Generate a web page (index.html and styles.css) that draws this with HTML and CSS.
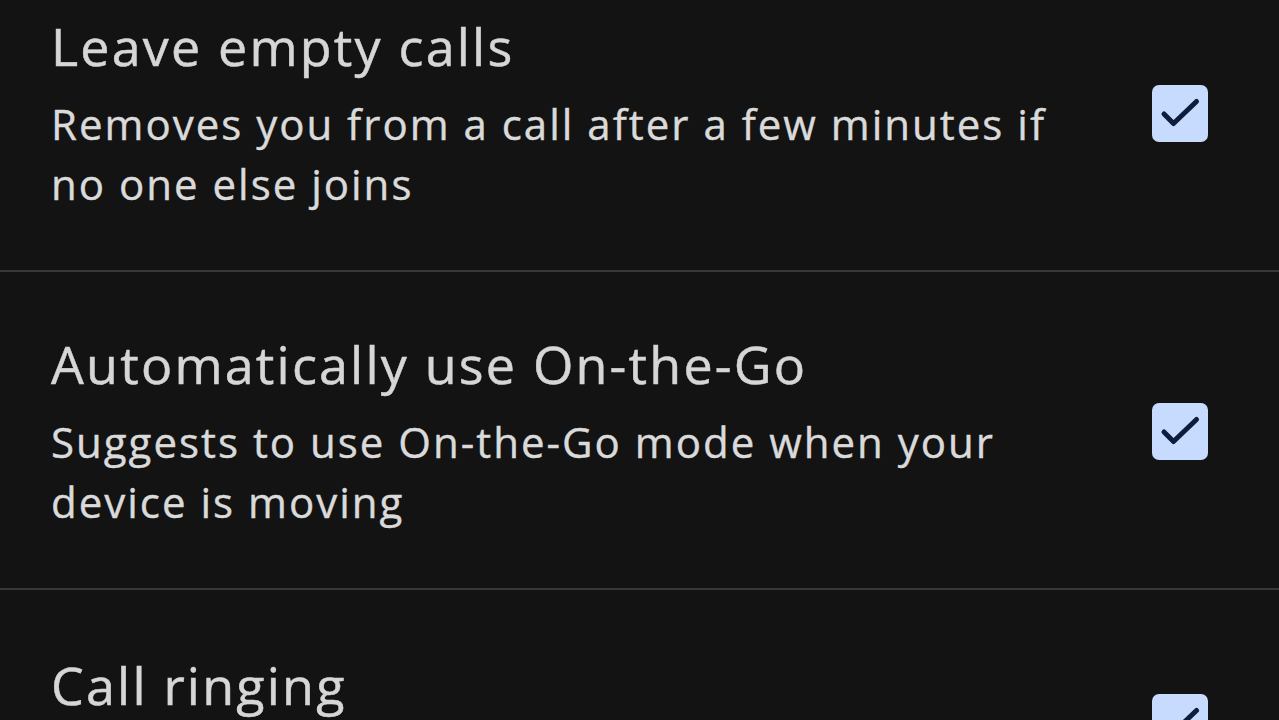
FILE: index.html
```html
<!DOCTYPE html>
<html lang="en">
<head>
<meta charset="utf-8">
<title>Call settings</title>
<link rel="stylesheet" href="styles.css">
</head>
<body>
<main class="list">
  <section class="row row-first">
    <div class="text">
      <div class="title">Leave empty calls</div>
      <div class="summary">Removes you from a call after a few minutes if no one else joins</div>
    </div>
    <div class="check" aria-checked="true" role="checkbox">
      <svg viewBox="0 0 56 57" width="56" height="57"><path d="M12 29 L21.5 38.5 L44.5 16.5" fill="none" stroke="#0e1d3b" stroke-width="5" stroke-linecap="round" stroke-linejoin="round"/></svg>
    </div>
  </section>
  <section class="row">
    <div class="text">
      <div class="title">Automatically use On-the-Go</div>
      <div class="summary">Suggests to use On-the-Go mode when your device is moving</div>
    </div>
    <div class="check" aria-checked="true" role="checkbox">
      <svg viewBox="0 0 56 57" width="56" height="57"><path d="M12 29 L21.5 38.5 L44.5 16.5" fill="none" stroke="#0e1d3b" stroke-width="5" stroke-linecap="round" stroke-linejoin="round"/></svg>
    </div>
  </section>
  <section class="row row-last">
    <div class="text">
      <div class="title">Call ringing</div>
      <div class="summary">Ring for incoming calls</div>
    </div>
    <div class="check" aria-checked="true" role="checkbox">
      <svg viewBox="0 0 56 57" width="56" height="57"><path d="M12 29 L21.5 38.5 L44.5 16.5" fill="none" stroke="#0e1d3b" stroke-width="5" stroke-linecap="round" stroke-linejoin="round"/></svg>
    </div>
  </section>
</main>
</body>
</html>
```
FILE: styles.css
```css
html, body {
  margin: 0;
  padding: 0;
  background: #131313;
  height: 100%;
  overflow: hidden;
}
body {
  font-family: "Open Sans", Roboto, sans-serif;
  color: #dcdcdc;
}
.list {
  display: flex;
  flex-direction: column;
}
.row {
  display: flex;
  align-items: center;
  justify-content: space-between;
  padding: 48px 71px 56px 51px;
  border-bottom: 2px solid #383838;
  gap: 40px;
}
.row-first {
  padding-top: 0;
  margin-top: 2px;
}
.row-last {
  padding-top: 51px;
}
.text {
  flex: 1;
  max-width: 1040px;
}
.title {
  font-size: 52px;
  line-height: 88px;
  letter-spacing: 2.2px;
  color: #d6d6d6;
  -webkit-text-stroke: 0.5px #d6d6d6;
}
.summary {
  margin-top: 4px;
  font-size: 42px;
  line-height: 60px;
  letter-spacing: 2px;
  color: #dadada;
  -webkit-text-stroke: 0.4px #dadada;
}
.check {
  margin-top: 10px;
  width: 56px;
  height: 57px;
  background: #c6dbfd;
  border-radius: 7px;
  flex: none;
  display: flex;
}
```
